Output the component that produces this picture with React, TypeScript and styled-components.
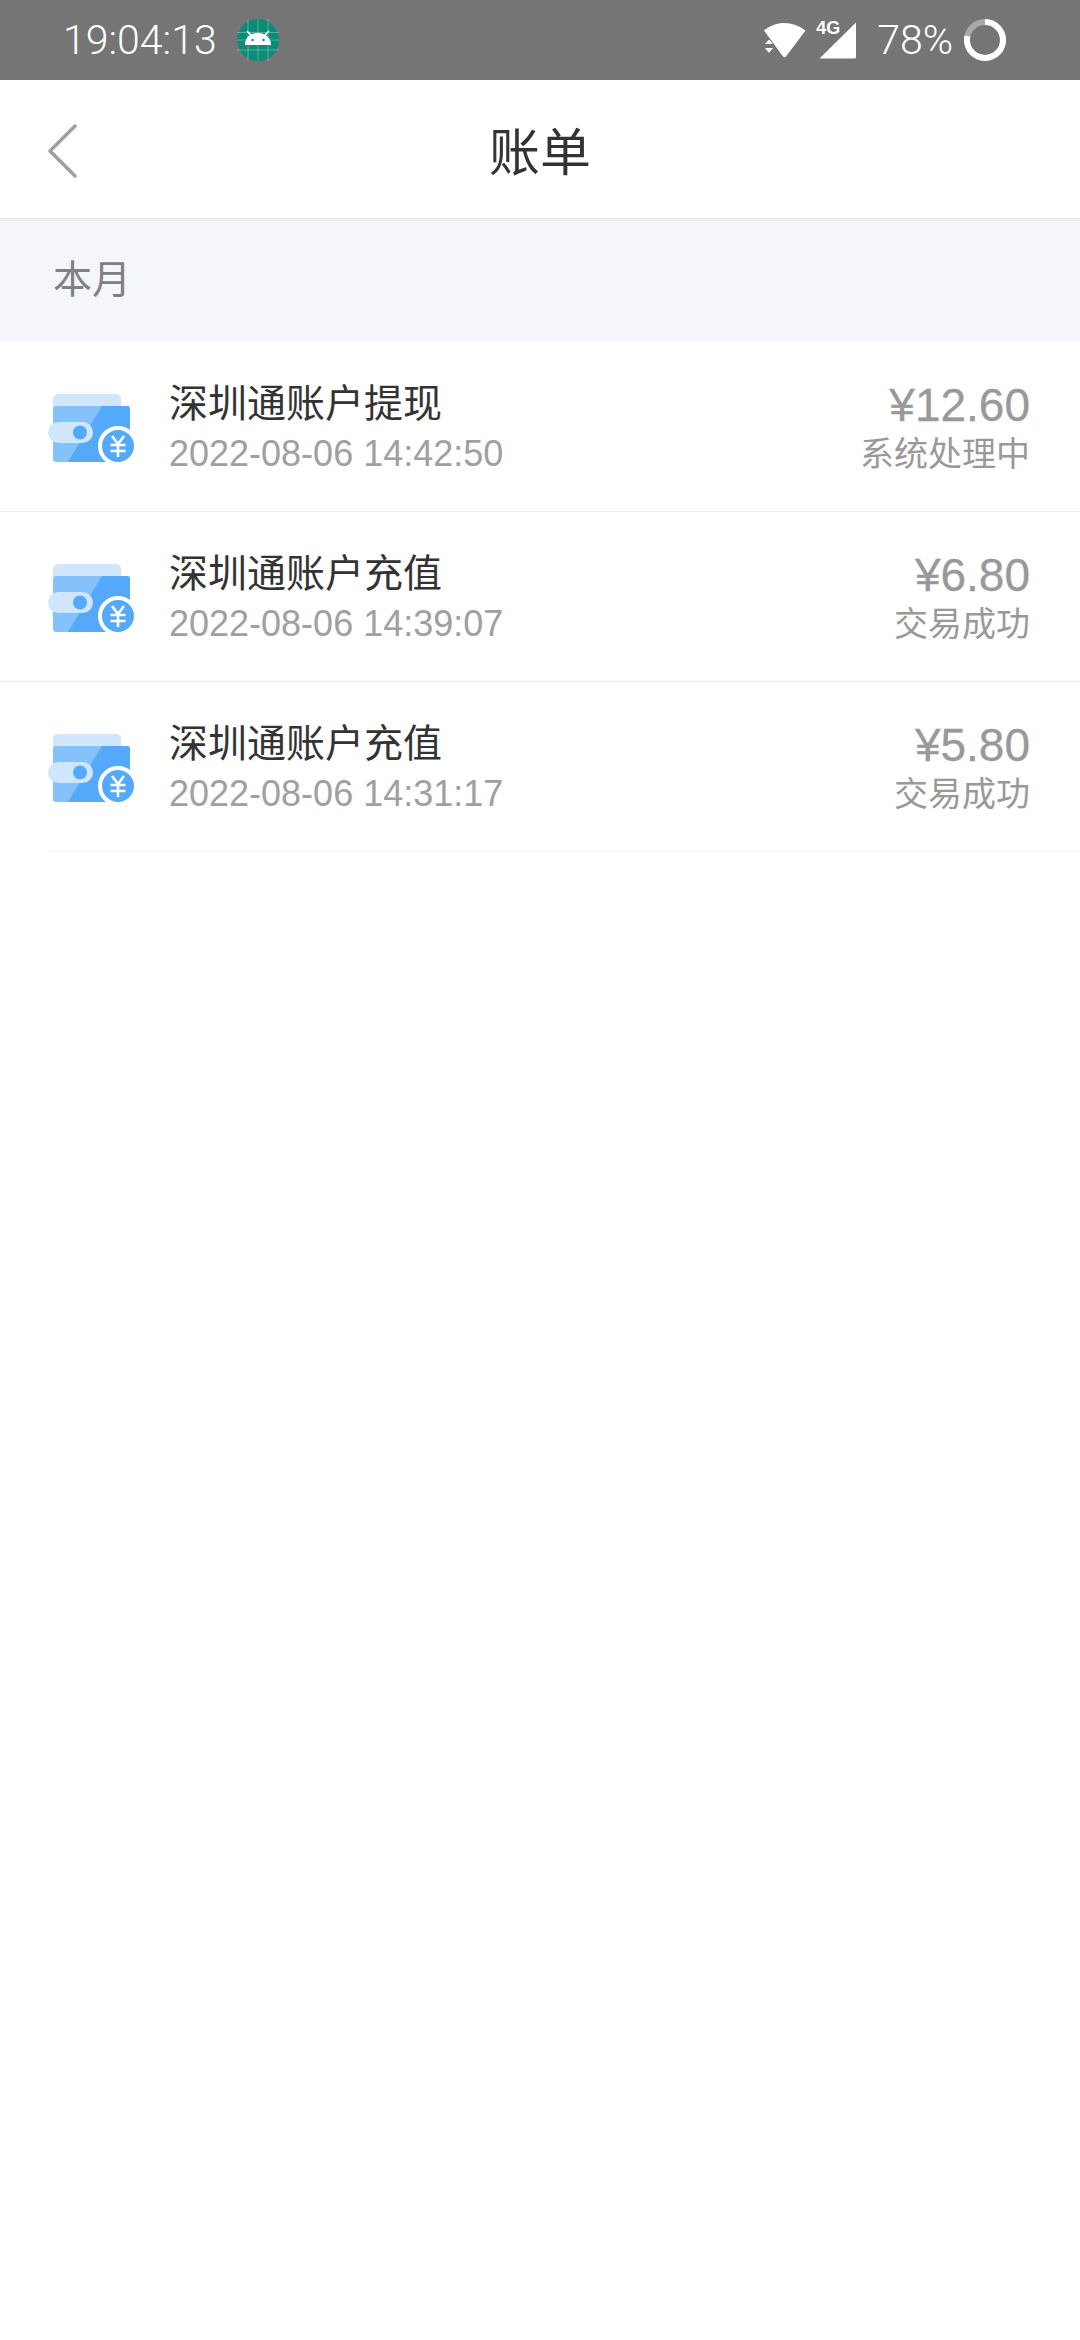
import React from 'react'
import styled, { createGlobalStyle } from 'styled-components'

const FONT = `"Liberation Sans", "Noto Sans CJK SC", sans-serif`
const LIGHT_FONT = `Roboto, "Noto Sans CJK SC", sans-serif`

const GlobalStyle = createGlobalStyle`
  html, body {
    margin: 0;
    padding: 0;
    background: #fff;
    font-family: ${FONT};
  }
`

const bills = [
  { title: '深圳通账户提现', date: '2022-08-06 14:42:50', amount: '¥12.60', status: '系统处理中' },
  { title: '深圳通账户充值', date: '2022-08-06 14:39:07', amount: '¥6.80', status: '交易成功' },
  { title: '深圳通账户充值', date: '2022-08-06 14:31:17', amount: '¥5.80', status: '交易成功' },
]

const AndroidBadge = () => (
  <svg width="42" height="42" viewBox="0 0 42 42">
    <circle cx="21" cy="21" r="21" fill="#0b8c76" />
    <path d="M0 13.500H42M0 21H42M0 31H42M11 0V42M21 0V42M31 0V42" stroke="#fff" strokeOpacity="0.3" strokeWidth="1" />
    <path d="M8 26c0-7 5-12 13-12s13 5 13 12z" fill="#fff" />
    <path d="M10 12l5 5M32 12l-5 5" stroke="#fff" strokeWidth="1.600" />
    <circle cx="15.500" cy="21" r="1.200" fill="#0b8c76" />
    <circle cx="26.500" cy="21" r="1.200" fill="#0b8c76" />
  </svg>
)

const WifiIcon = () => (
  <svg width="44" height="36" viewBox="0 0 44 36">
    <path d="M1 8.500C7 3.500 14 1 21.500 1S36 3.500 42.500 8.500L23 34.500q-1.500 1.500-3 0z" fill="#fff" />
    <path d="M1 22.500l5-5.500 5 5.500zM1 25.500l5 6 5-6z" fill="#fff" stroke="#757575" strokeWidth="1" />
  </svg>
)

const SignalIcon = () => (
  <svg width="40" height="38" viewBox="0 0 40 38">
    <path d="M38 1.500V36q0 1.500-1.500 1.500H1.500z" fill="#fff" />
  </svg>
)

const BatteryRing = () => (
  <svg width="44" height="44" viewBox="0 0 44 44">
    <circle cx="22" cy="22" r="18" fill="none" stroke="#a9a9a9" strokeWidth="6" />
    <circle
      cx="22"
      cy="22"
      r="18"
      fill="none"
      stroke="#fff"
      strokeWidth="6"
      strokeDasharray="88.200 113.100"
      transform="rotate(-90 22 22)"
    />
  </svg>
)

const BackIcon = () => (
  <svg width="32" height="56" viewBox="0 0 32 56">
    <path d="M28 3L3 28l25 25" fill="none" stroke="#a0a0a0" strokeWidth="3.600" strokeLinecap="round" strokeLinejoin="round" />
  </svg>
)

const WalletIcon = () => (
  <svg width="90" height="78" viewBox="0 0 90 78">
    <path d="M5 11a5 5 0 0 1 5-5h58a5 5 0 0 1 5 5v8H5z" fill="#cfe6fc" />
    <rect x="5" y="18" width="77" height="56" rx="3" fill="#85c1fb" />
    <path d="M54 18h25a3 3 0 0 1 3 3v50a3 3 0 0 1-3 3H20z" fill="#54a9fa" />
    <rect x="0" y="34" width="45" height="21" rx="10.500" fill="#cfe6fc" />
    <circle cx="32" cy="44.500" r="7" fill="#54a9fa" />
    <circle cx="70" cy="58" r="18" fill="#54a9fa" stroke="#fff" strokeWidth="4" />
    <path d="M64 48l6 8 6-8M62.500 57h15M62.500 63h15M70 56v13" fill="none" stroke="#fff" strokeWidth="2.600" />
  </svg>
)

const App = () => {
  return (
    <Page>
      <GlobalStyle />
      <StatusBar>
        <StatusGroup>
          <Clock>19:04:13</Clock>
          <AndroidBadge />
        </StatusGroup>
        <StatusGroup>
          <WifiIcon />
          <Network>
            <NetworkLabel>4G</NetworkLabel>
            <SignalIcon />
          </Network>
          <Battery>78%</Battery>
          <BatteryRing />
        </StatusGroup>
      </StatusBar>

      <Header>
        <BackButton>
          <BackIcon />
        </BackButton>
        <Title>账单</Title>
      </Header>

      <SectionLabel>本月</SectionLabel>

      <List>
        {bills.map(({ title, date, amount, status }, index) => {
          return (
            <Row key={date} $last={index === bills.length - 1}>
              <WalletIcon />
              <RowMain>
                <RowTitle>{title}</RowTitle>
                <RowDate>{date}</RowDate>
              </RowMain>
              <RowSide>
                <Amount>{amount}</Amount>
                <RowStatus>{status}</RowStatus>
              </RowSide>
            </Row>
          )
        })}
      </List>
    </Page>
  )
}

export default App

const Page = styled.div`
  width: 1080px;
  min-height: 2340px;
  background: #fff;
`

const StatusBar = styled.div`
  height: 80px;
  box-sizing: border-box;
  padding: 0 73px 0 63px;
  background: #757575;
  display: flex;
  align-items: center;
  justify-content: space-between;
`

const StatusGroup = styled.div`
  display: flex;
  align-items: center;
`

const Clock = styled.span`
  font-family: ${LIGHT_FONT};
  font-size: 41px;
  font-weight: 300;
  color: #fff;
  margin-right: 20px;
`

const Network = styled.div`
  position: relative;
  margin-left: 11px;
  display: flex;
`

const NetworkLabel = styled.span`
  position: absolute;
  left: -2px;
  top: -3px;
  font-size: 18px;
  font-weight: 700;
  color: #fff;
`

const Battery = styled.span`
  font-family: ${LIGHT_FONT};
  font-size: 41px;
  font-weight: 300;
  color: #fff;
  margin: 0 10px 0 19px;
`

const Header = styled.div`
  position: relative;
  height: 138px;
  background: #fff;
  border-bottom: 3px solid #ebebeb;
  display: flex;
  align-items: center;
  justify-content: center;
`

const BackButton = styled.div`
  position: absolute;
  left: 47px;
  top: 43px;
  display: flex;
`

const Title = styled.div`
  font-size: 51px;
  color: #333;
`

const SectionLabel = styled.div`
  height: 121px;
  box-sizing: border-box;
  padding-left: 53px;
  background: #f5f6fa;
  font-size: 39px;
  line-height: 118px;
  color: #808084;
`

const List = styled.div`
  display: flex;
  flex-direction: column;
`

const Row = styled.div<{ $last: boolean }>`
  position: relative;
  height: 170px;
  box-sizing: border-box;
  padding: 0 50px 0 48px;
  border-bottom: 1px solid ${props => (props.$last ? 'transparent' : '#ececec')};
  display: flex;
  align-items: center;

  &::after {
    content: '';
    display: ${props => (props.$last ? 'block' : 'none')};
    position: absolute;
    left: 48px;
    right: 0;
    bottom: -1px;
    height: 1px;
    background: #f4f4f4;
  }
`

const RowMain = styled.div`
  flex: 1;
  margin-left: 31px;
  padding-top: 6px;
  display: flex;
  flex-direction: column;
`

const RowTitle = styled.div`
  font-size: 39px;
  line-height: 48px;
  color: #333;
`

const RowDate = styled.div`
  font-size: 36px;
  line-height: 52px;
  color: #a0a0a0;
`

const RowSide = styled.div`
  display: flex;
  flex-direction: column;
  align-items: flex-end;
  padding-top: 5px;
`

const Amount = styled.div`
  font-size: 46px;
  line-height: 50px;
  color: #999;
  -webkit-text-stroke: 0.3px #999;
`

const RowStatus = styled.div`
  font-size: 34px;
  line-height: 48px;
  color: #999;
`
